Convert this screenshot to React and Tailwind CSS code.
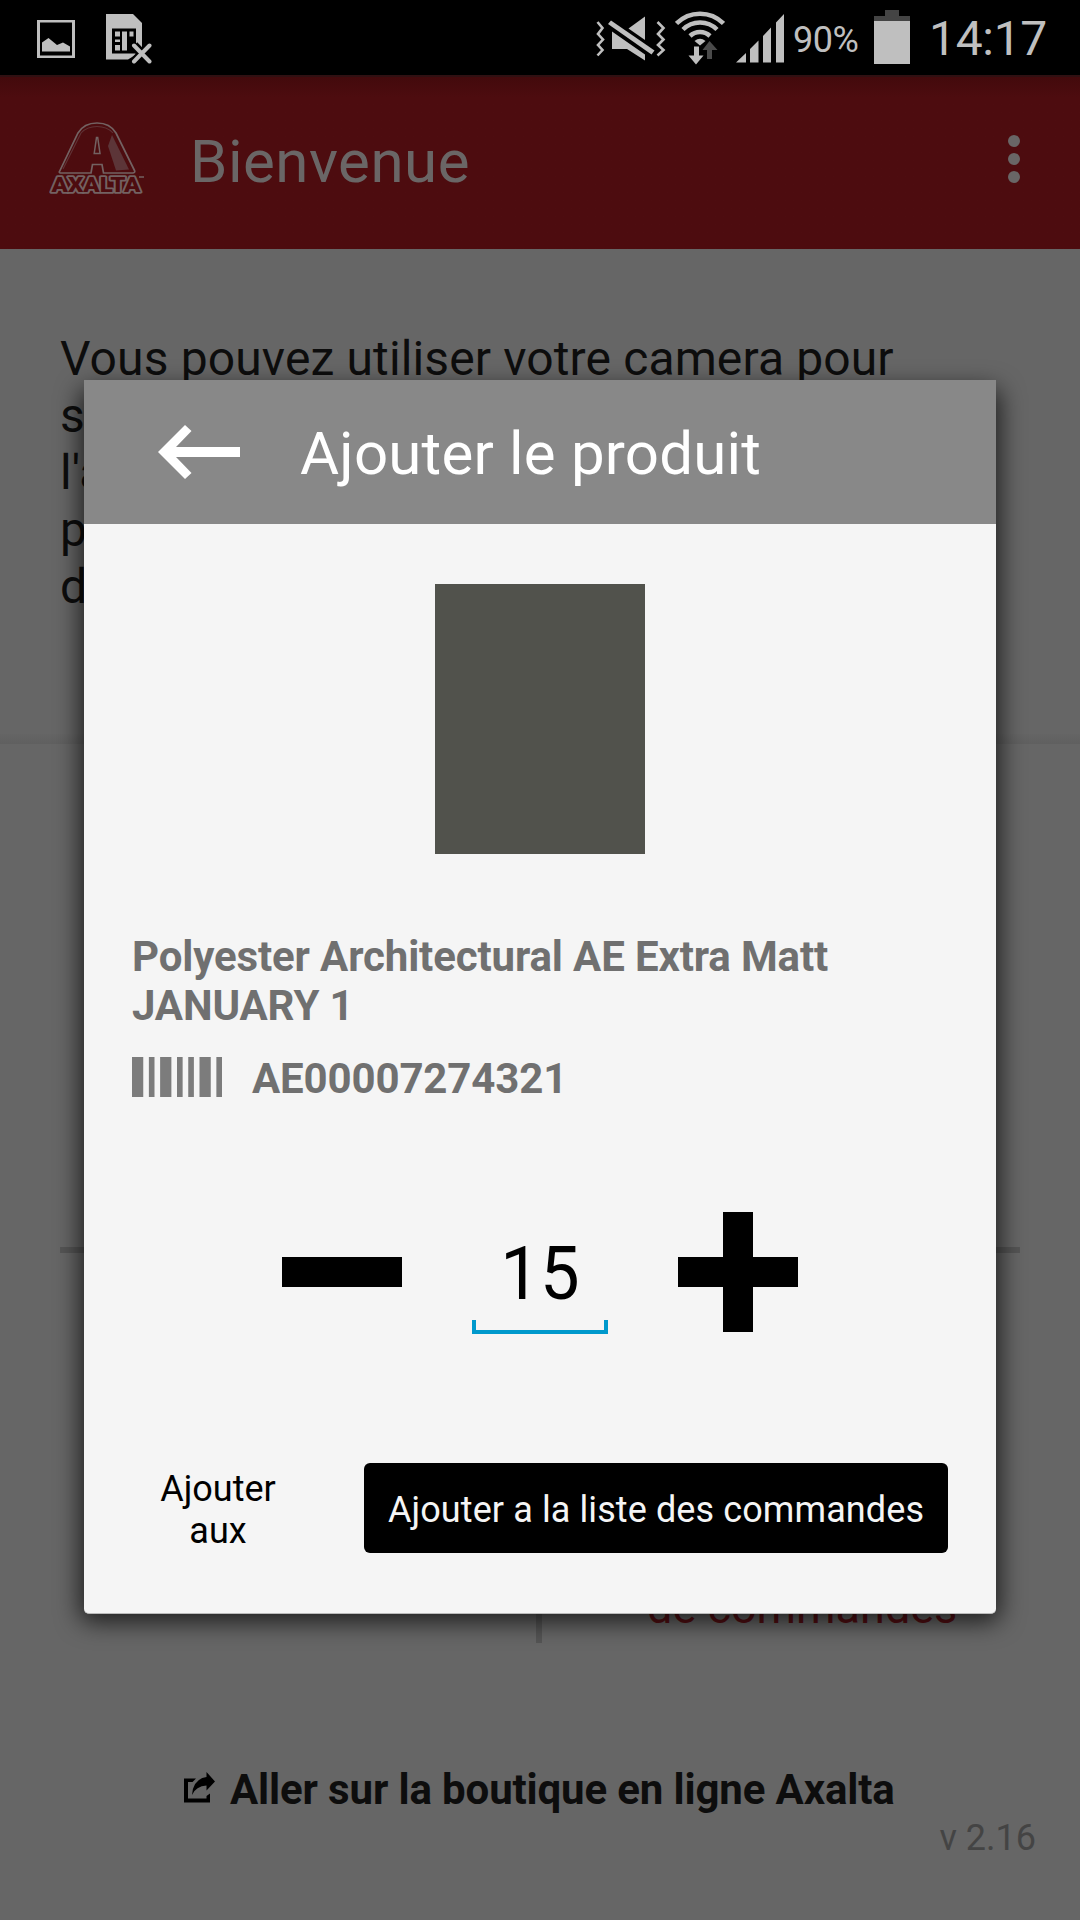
function ImageIcon() {
  return (
    <svg className="block" width="38" height="38" viewBox="0 0 38 38" fill="#bfbfbf">
      <path fillRule="evenodd" d="M0 0H38V38H0ZM3 2.5V35.5H35V2.5Z" />
      <path d="M5 22.5L11.5 18 20 25 26 22.5 33 26.5V31.5H5Z" />
    </svg>
  );
}

function SimIcon() {
  return (
    <svg className="block" width="46" height="50" viewBox="0 0 46 50">
      <path d="M0 0H27L36 9V37L22 45.5H0Z" fill="#bfbfbf" />
      <rect x="6" y="14.5" width="24" height="25" fill="#000" />
      <g fill="#bfbfbf">
        <rect x="9" y="17.5" width="5" height="5" />
        <rect x="9" y="25.5" width="5" height="2.5" />
        <rect x="9" y="31" width="5" height="5.5" />
        <rect x="16" y="17.5" width="5" height="19" />
        <rect x="23.5" y="17.5" width="4" height="5" />
      </g>
      <path d="M28 31.500L44 48M44 31.500L28 48" stroke="#000" strokeWidth="9" />
      <path d="M28 31.500L43.500 47.500M43.500 31.500L28 47.500" stroke="#bfbfbf" strokeWidth="4" strokeLinecap="round" />
    </svg>
  );
}

function MuteIcon() {
  return (
    <svg className="block" width="70" height="46" viewBox="0 0 70 46">
      <g fill="none" stroke="#bfbfbf" strokeWidth="2.6">
        <path d="M1.500 6L6.500 12 2 18 7 23.500 2 29 6.500 34 1.500 39.500" />
        <path d="M61.500 6L67.500 12 62 18 67.500 23.500 62 29 67.500 34 61.500 39.500" />
      </g>
      <g fill="#bfbfbf">
        <path d="M49 0.500V24L32.500 12.500Z" />
        <path d="M16 15.500L49 38.500V44.500L31 33H16Z" />
      </g>
      <path d="M13.500 6.500L57 37" stroke="#000" strokeWidth="9" />
      <path d="M15 4.500L58.500 34.500 55.500 38.500 12 8Z" fill="#bfbfbf" />
    </svg>
  );
}

function WifiIcon() {
  return (
    <svg className="block" width="50" height="54" viewBox="0 0 50 54">
      <g fill="none" stroke="#bfbfbf" strokeWidth="4.500">
        <path d="M1.500 12.500A33 33 0 0 1 48.500 12.500" />
        <path d="M8 18.500A24 24 0 0 1 42 18.500" />
        <path d="M15 25A14.500 14.500 0 0 1 35 25" />
      </g>
      <path d="M19.500 30Q25 25.500 30.500 30L25 34.500Z" fill="#bfbfbf" />
      <path d="M19 35.500H24V44.500H28.500L21 53.500 13.500 44.500H19Z" fill="#bfbfbf" />
      <path d="M34.500 30L42.500 39H37V48H32V39H27.500Z" fill="#4a4a4a" />
    </svg>
  );
}

function SignalIcon() {
  return (
    <svg className="block" width="48" height="49" viewBox="0 0 48 49" fill="#bfbfbf">
      <path d="M0 48.500L10 39V48.500ZM14 35L22.500 26.500V48.500H14ZM27 22L35 13.500V48.500H27ZM40 8.500L48 0V48.500H40Z" />
    </svg>
  );
}

function StatusBar() {
  return (
    <div className="flex h-[75px] items-start bg-black text-[#bfbfbf]">
      <div className="ml-[37px] mt-[20px]"><ImageIcon /></div>
      <div className="ml-[31px] mt-[14px]"><SimIcon /></div>
      <div className="ml-auto mr-[9px] mt-[16px]"><MuteIcon /></div>
      <div className="mr-[11px] mt-[11px]"><WifiIcon /></div>
      <div className="mr-[9px] mt-[14px]"><SignalIcon /></div>
      <div className="mt-[19px] w-[81px] text-[36px] leading-[42px] tracking-[-0.5px]">90%</div>
      <div className="mt-[10px] flex w-[36px] flex-col items-center">
        <div className="h-[6px] w-[14px] bg-[#444]" />
        <div className="h-[5px] w-full bg-[#444]" />
        <div className="h-[43px] w-full bg-[#bfbfbf]" />
      </div>
      <div className="ml-[19px] mr-[31px] mt-[11px] w-[120px] text-[48px] leading-[56px] tracking-[-0.3px]">14:17</div>
    </div>
  );
}

function AxaltaLogo() {
  return (
    <svg className="block" width="97" height="76" viewBox="0 0 97 76">
      <path d="M10.500 49.500L29 11Q35 1 48 1T67 11L85.500 48.500Q86.500 50.500 84 51H54.500L53 42.500H43.500L42 51H12.500Q9.500 51 10.500 49.500Z" fill="none" stroke="#736262" strokeWidth="1.700" />
      <path d="M14 47L32 11Q38 4.500 48 4.500T64 11" fill="none" stroke="#603336" strokeWidth="1.100" />
      <path d="M63 13L80 47.500 67 48.500 59 24Z" fill="#5c3538" />
      <path d="M47.500 15.500H48.700L51 31.500H45.200Z" fill="none" stroke="#736262" strokeWidth="1.500" />
      <text x="2.500" y="70" textLength="89" lengthAdjust="spacingAndGlyphs" fontFamily="Roboto, sans-serif" fontWeight="900" fontSize="20" fill="#4d0c0f" stroke="#736262" strokeWidth="3.400" strokeLinejoin="round" paintOrder="stroke">AXALTA</text>
      <path d="M90 55H95" stroke="#736262" strokeWidth="1.500" />
    </svg>
  );
}

function AppBar() {
  return (
    <div className="flex h-[174px] items-start border-t-2 border-[#301012] bg-linear-to-b from-[#430a0c] via-[#4d0c0f] via-12% to-[#4d0c0f] text-[#6a6666]">
      <div className="ml-[49px] mt-[45px] w-[97px]"><AxaltaLogo /></div>
      <div className="ml-[44px] mt-[50px] text-[60px] leading-[70px] tracking-[0.5px]">Bienvenue</div>
      <div className="ml-auto mr-[60px] mt-[58px] flex flex-col gap-[6px]">
        <div className="size-[12px] rounded-full bg-[#696666]" />
        <div className="size-[12px] rounded-full bg-[#696666]" />
        <div className="size-[12px] rounded-full bg-[#696666]" />
      </div>
    </div>
  );
}

function Welcome() {
  return (
    <div>
      <div className="flex h-[495px] flex-col text-[48px] leading-[57px] tracking-[0.13px] text-[#0d0d0d]">
        <div className="flex-1 pl-[60px] pt-[81px]">
          <div>Vous pouvez utiliser votre camera pour</div>
          <div>s</div>
          <div>l'a</div>
          <div>p</div>
          <div>d</div>
        </div>
        <div className="h-[10px] bg-linear-to-b from-[#656565] to-[#606060]" />
      </div>
      <div className="mx-[60px] h-[899px]">
        <div className="h-[509px] border-b-[6px] border-[#555]" />
        <div className="flex h-[390px]">
          <div className="w-[482px] border-r-[6px] border-[#555]" />
          <div className="flex-1 whitespace-nowrap pl-[105px] pt-[328px] text-[45px] leading-[53px] text-[#550f13]">de commandes</div>
        </div>
      </div>
      <div className="mt-[118px] flex items-start pl-[184px] text-[#0d0d0d]">
        <svg className="mt-[11px] block" width="31" height="31" viewBox="0 0 31 31" fill="#000">
          <path d="M0 6.500H12L8.500 10H4V26.500H22.500V24L26 21.500V30.500H0Z" />
          <path d="M22.500 0L31 9.500 22.500 18.500V13.500Q12 14 8 23 9 7 22.500 5Z" />
        </svg>
        <div className="ml-[15px] mt-[4px] text-[42px] font-bold leading-[50px] tracking-[-0.14px]">Aller sur la boutique en ligne Axalta</div>
      </div>
      <div className="mt-[2px] pr-[44px] text-right text-[36px] leading-[42px] text-[#444]">v 2.16</div>
    </div>
  );
}

function Barcode() {
  return (
    <svg className="block" width="90" height="40" viewBox="0 0 16 40" preserveAspectRatio="none" fill="#7c7c7c">
      <path d="M0 0H2V40H0ZM3 0H4V40H3ZM5 0H7V40H5ZM8 0H9V40H8ZM10 0H11V40H10ZM12 0H14V40H12ZM15 0H16V40H15Z" />
    </svg>
  );
}

function ProductDialog() {
  return (
    <div className="absolute left-[84px] top-[380px] h-[1234px] w-[912px] overflow-hidden rounded-b-[5px] border-b border-[#bbb] bg-[#f5f5f5]">
      <div className="flex h-[144px] items-start bg-[#888] text-white">
        <svg className="ml-[74px] mt-[45px] block" width="82" height="54" viewBox="0 0 82 54" fill="#fff">
          <path d="M0 27L27 0 33.500 6 18 22H82V32H18L33.500 48 27 54Z" />
        </svg>
        <div className="ml-[60px] mt-[39px] text-[60px] leading-[70px] tracking-[0.2px]">Ajouter le produit</div>
      </div>
      <div className="px-[48px] pt-[60px] text-[42px] font-bold leading-[49px] tracking-[-0.14px] text-[#707070]">
        <div className="mx-auto h-[270px] w-[210px] bg-[#51524c]" />
        <div className="mt-[78px] h-[98px]">Polyester Architectural AE Extra Matt JANUARY 1</div>
        <div className="mt-[24px] flex items-start">
          <div className="mt-[3px]"><Barcode /></div>
          <div className="ml-[30px]">AE00007274321</div>
        </div>
      </div>
      <div className="mt-[109px] flex h-[120px] items-start pl-[198px]">
        <div className="mt-[45px] h-[30px] w-[120px] bg-black" />
        <div className="ml-[70px] w-[136px] text-black">
          <div className="mt-[17px] h-[88px] scale-x-[0.94] text-center text-[75px] leading-[88px]">15</div>
          <div className="mt-[3px] h-[14px] border-4 border-t-0 border-[#0099cc]" />
        </div>
        <svg className="ml-[70px] block" width="120" height="120" viewBox="0 0 120 120">
          <path d="M45 0H75V45H120V75H75V120H45V75H0V45H45Z" fill="#000" />
        </svg>
      </div>
      <div className="mt-[131px] flex items-start px-[48px] text-[36px] leading-[42px]">
        <div className="mt-[5px] w-[172px] text-center text-black">Ajouter<br />aux</div>
        <div className="ml-[60px] flex h-[90px] w-[584px] items-center justify-center whitespace-nowrap rounded-[6px] bg-black pt-[3px] tracking-[0.1px] text-[#f5f5f5]">Ajouter a la liste des commandes</div>
      </div>
    </div>
  );
}

function DialogShadow() {
  return <div className="absolute left-[86px] top-[388px] h-[1222px] w-[908px] rounded-[5px] shadow-[0_6px_24px_6px_rgba(0,0,0,0.7)]" />;
}

export default function App() {
  return (
    <div className="relative h-[1920px] w-[1080px] overflow-hidden bg-[#666] font-['Roboto',sans-serif]">
      <StatusBar />
      <AppBar />
      <Welcome />
      <DialogShadow />
      <ProductDialog />
    </div>
  );
}
